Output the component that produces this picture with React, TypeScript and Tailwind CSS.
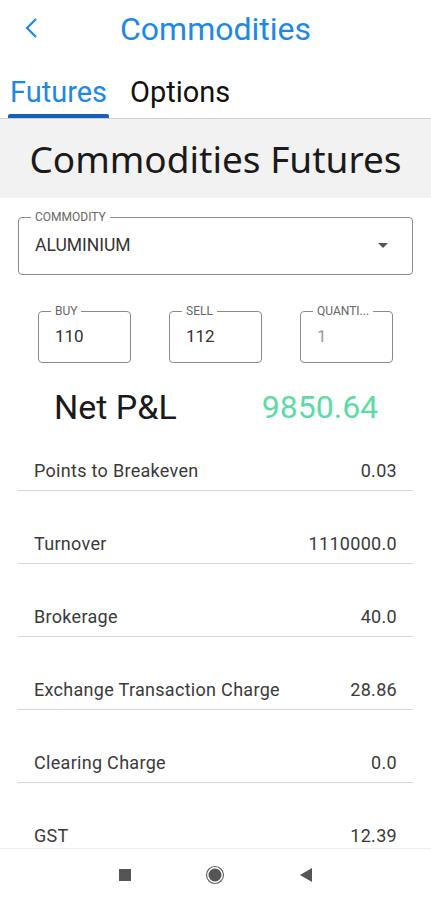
import React from "react";

const ROWS = [
  { label: "Points to Breakeven", value: "0.03" },
  { label: "Turnover", value: "1110000.0" },
  { label: "Brokerage", value: "40.0" },
  { label: "Exchange Transaction Charge", value: "28.86" },
  { label: "Clearing Charge", value: "0.0" },
  { label: "GST", value: "12.39" },
];

const INPUTS = [
  { label: "BUY", value: "110", muted: false },
  { label: "SELL", value: "112", muted: false },
  { label: "QUANTI...", value: "1", muted: true },
];

function Field({ label, value, muted }: { label: string; value: string; muted?: boolean }) {
  return (
    <div className="relative h-[52px] w-[93px] rounded-[4px] border border-[#8a8a8a]">
      <span className="absolute -top-[8px] left-[12px] bg-white px-[4px] text-[12px] leading-[14px] text-[#666]">
        {label}
      </span>
      <span
        className={
          "absolute left-[16px] top-[14px] text-[17px] leading-[20px] " +
          (muted ? "text-[#999]" : "text-[#333]")
        }
      >
        {value}
      </span>
    </div>
  );
}

export default function App() {
  return (
    <div
      className="flex h-[900px] w-[431px] flex-col overflow-hidden bg-white"
      style={{ fontFamily: "Roboto, 'Liberation Sans', sans-serif" }}
    >
      <div className="flex-1 overflow-hidden">
        {/* header */}
        <header className="relative flex h-[57px] items-center justify-center">
          <svg className="absolute left-[22px] top-[17px]" width="20" height="22" viewBox="0 0 20 22">
            <polyline points="14,2 5,11 14,20" fill="none" stroke="#1e88e5" strokeWidth="2.2" />
          </svg>
          <h1 className="text-[32px] leading-none text-[#1e88e5]">Commodities</h1>
        </header>

        {/* tabs */}
        <div className="flex h-[62px] items-end border-b border-[#cfcfcf]">
          <div className="ml-[8px] flex flex-col items-center">
            <span className="text-[29px] leading-[34px] text-[#1e88e5]">Futures</span>
            <div className="mt-[5px] h-[4px] w-[101px] rounded-t-[2px] bg-[#1560b8]" />
          </div>
          <div className="ml-[21px] pb-[9px] text-[29px] leading-[34px] text-[#111]">Options</div>
        </div>

        {/* band */}
        <div className="flex h-[79px] items-center justify-center bg-[#f2f2f2]">
          <span
            className="text-[37px] leading-none text-[#1a1a1a]"
            style={{ fontFamily: "'Noto Sans', 'Open Sans', sans-serif" }}
          >
            Commodities Futures
          </span>
        </div>

        {/* select */}
        <div className="relative ml-[18px] mt-[19px] h-[58px] w-[395px] rounded-[4px] border border-[#8a8a8a]">
          <span className="absolute -top-[8px] left-[12px] bg-white px-[4px] text-[12px] leading-[14px] text-[#666]">
            COMMODITY
          </span>
          <span className="absolute left-[16px] top-[17px] text-[17.5px] leading-[20px] text-[#333]">ALUMINIUM</span>
          <svg className="absolute right-[24px] top-[25px]" width="10" height="6" viewBox="0 0 10 6">
            <polygon points="0,0 10,0 5,5" fill="#555" />
          </svg>
        </div>

        {/* inputs */}
        <div className="mt-[36px] flex justify-evenly">
          {INPUTS.map((f) => (
            <Field key={f.label} {...f} />
          ))}
        </div>

        {/* net */}
        <div className="mt-[24px] flex h-[40px] items-center">
          <span className="ml-[54px] text-[34px] leading-none text-[#1a1a1a]">Net P&amp;L</span>
          <span className="ml-[85px] text-[32px] leading-none text-[#5cdca4]">9850.64</span>
        </div>

        {/* rows */}
        <div className="mx-[18px]">
          {ROWS.map((r, i) => (
            <div
              key={r.label}
              className={
                "flex items-center justify-between border-b border-[#d6d6d6] pb-[9px] pl-[16px] pr-[16px] text-[18px] leading-[21px] tracking-[0.3px] text-[#3a3a3a] " +
                (i === 0 ? "pt-[33px]" : "pt-[42px]")
              }
            >
              <span>{r.label}</span>
              <span>{r.value}</span>
            </div>
          ))}
        </div>
      </div>

      {/* system nav */}
      <nav className="flex h-[52px] shrink-0 items-center justify-center gap-[74px] border-t border-[#eeeeee] bg-white">
        <div className="h-[12px] w-[12px] bg-[#555]" />
        <svg width="20" height="20" viewBox="0 0 20 20">
          <circle cx="10" cy="10" r="8.5" fill="none" stroke="#666" strokeWidth="1.2" />
          <circle cx="10" cy="10" r="6.5" fill="#555" />
        </svg>
        <svg width="14" height="16" viewBox="0 0 14 16">
          <polygon points="13,1 13,15 1,8" fill="#555" />
        </svg>
      </nav>
    </div>
  );
}
